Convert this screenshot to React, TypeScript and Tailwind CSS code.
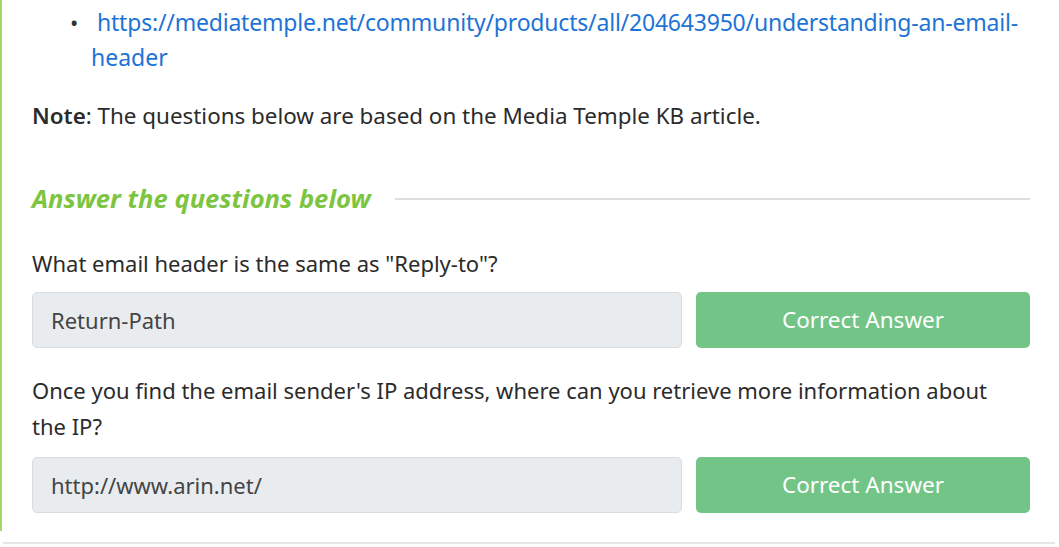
import React from "react";

export default function App() {
  return (
    <div className="w-[1059px] h-[547px] bg-white overflow-hidden" style={{ fontFamily: '"Noto Sans", "Open Sans", sans-serif' }}>
      <div className="border-l-[2px] border-[#a6d46a] h-[531px] pl-[30px] pr-[29px]">
        <ul className="pt-[5px] pl-[59px] text-[22px] leading-[35px] text-[#1d73d6]">
          <li className="relative">
            <span className="absolute left-[-21px] top-0 text-[#333]">•</span>
            <span className="pl-[6px] text-[23px] tracking-[-0.2px]">https://mediatemple.net/community/products/all/204643950/understanding-an-email-</span>
            <br />
            <span className="text-[23px]">header</span>
          </li>
        </ul>
        <p className="mt-[23px] text-[22.4px] leading-[35px] text-[#2b2b2b]">
          <span className="font-semibold">Note</span>: The questions below are based on the Media Temple KB article.
        </p>
        <div className="mt-[48px] flex items-center gap-[24px]">
          <h3 className="italic font-bold text-[25.6px] leading-[35px] text-[#7dc540] whitespace-nowrap">Answer the questions below</h3>
          <div className="flex-1 h-[2px] bg-[#dedede]" />
        </div>
        <p className="mt-[29px] text-[22px] leading-[36px] text-[#2b2b2b]">What email header is the same as "Reply-to"?</p>
        <div className="mt-[11px] flex gap-[14px]">
          <div className="w-[650px] h-[56px] rounded-[5px] bg-[#e9ecef] border border-[#d9dde1] flex items-center pl-[18px] text-[22px] text-[#444]">Return-Path</div>
          <div className="flex-1 h-[56px] rounded-[5px] bg-[#73c587] flex items-center justify-center text-[22.5px] text-white">Correct Answer</div>
        </div>
        <p className="mt-[24px] max-w-[975px] text-[22px] leading-[36px] text-[#2b2b2b]">Once you find the email sender's IP address, where can you retrieve more information about the IP?</p>
        <div className="mt-[13px] flex gap-[14px]">
          <div className="w-[650px] h-[56px] rounded-[5px] bg-[#e9ecef] border border-[#d9dde1] flex items-center pl-[18px] text-[22px] text-[#444]">http://www.arin.net/</div>
          <div className="flex-1 h-[56px] rounded-[5px] bg-[#73c587] flex items-center justify-center text-[22.5px] text-white">Correct Answer</div>
        </div>
      </div>
      <div className="mt-[11px] ml-[3px] mr-[4px] h-[2px] bg-[#e6e6e6]" />
    </div>
  );
}
